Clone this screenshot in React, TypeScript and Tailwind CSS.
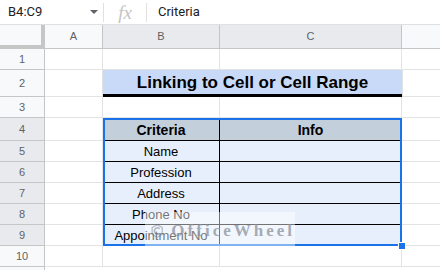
import React from "react";

const rowHead = "flex w-[45px] shrink-0 items-center justify-center border-r border-b border-[#c4c7c5] text-[11px] text-[#5f6368]";
const cell = "shrink-0 border-r border-b border-[#e2e3e3]";

function RowNum({ n, active, h }: { n: number; active?: boolean; h: string }) {
  return <div className={`${rowHead} ${h} ${active ? "bg-[#e8eaed]" : "bg-[#f8f9fa]"}`}>{n}</div>;
}

const items = ["Name", "Profession", "Address", "Phone No", "Appointment No"];

export default function App() {
  return (
    <div className="relative h-[270px] w-[440px] overflow-hidden bg-white font-['Liberation_Sans',Arial,sans-serif] text-[#202124]">
      {/* formula bar */}
      <div className="flex h-[25px] items-center border-b border-[#e0e0e0]">
        <div className="w-[85px] pl-2 font-['Roboto',sans-serif] text-[13px]">B4:C9</div>
        <div className="flex w-[18px] justify-center">
          <div className="h-0 w-0 border-x-[4px] border-t-[4px] border-x-transparent border-t-[#5f6368]" />
        </div>
        <div className="h-[19px] w-px bg-[#e0e0e0]" />
        <div className="flex w-[42px] justify-center font-['Liberation_Serif',serif] text-[19px] italic leading-none text-[#c4c4c4]">fx</div>
        <div className="h-[19px] w-px bg-[#e0e0e0]" />
        <div className="pl-[11px] font-['Roboto',sans-serif] text-[13px]">Criteria</div>
      </div>

      {/* column headers */}
      <div className="flex h-[24px] text-[11px] text-[#5f6368]">
        <div className="w-[45px] shrink-0 border-r-[4px] border-b-[4px] border-[#c4c7c5] bg-[#f8f9fa]" />
        <div className="flex w-[58px] shrink-0 items-center justify-center border-r border-b border-[#c4c7c5] bg-[#f8f9fa]">A</div>
        <div className="flex w-[117px] shrink-0 items-center justify-center border-r border-b border-[#c4c7c5] bg-[#e8eaed]">B</div>
        <div className="flex w-[182px] shrink-0 items-center justify-center border-r border-b border-[#c4c7c5] bg-[#e8eaed]">C</div>
        <div className="flex-1 border-b border-[#c4c7c5] bg-[#f8f9fa]" />
      </div>

      {/* row 1 */}
      <div className="flex h-[21px]">
        <RowNum n={1} h="h-[21px]" />
        <div className={`${cell} w-[58px]`} />
        <div className={`${cell} w-[117px]`} />
        <div className={`${cell} w-[182px]`} />
        <div className="flex-1 border-b border-[#e2e3e3]" />
      </div>

      {/* row 2: title */}
      <div className="flex h-[27px]">
        <RowNum n={2} h="h-[27px]" />
        <div className={`${cell} w-[58px]`} />
        <div className="flex w-[299px] shrink-0 items-center justify-center border-b-[3px] border-black bg-[#c9daf8] pt-[2px] text-[17px] font-bold text-black">
          Linking to Cell or Cell Range
        </div>
        <div className="flex-1 border-b border-l border-[#e2e3e3]" />
      </div>

      {/* row 3 */}
      <div className="flex h-[21px]">
        <RowNum n={3} h="h-[21px]" />
        <div className={`${cell} w-[58px]`} />
        <div className={`${cell} w-[117px]`} />
        <div className={`${cell} w-[182px]`} />
        <div className="flex-1 border-b border-[#e2e3e3]" />
      </div>

      {/* row 4: table header */}
      <div className="flex h-[23px]">
        <RowNum n={4} active h="h-[23px]" />
        <div className={`${cell} w-[58px]`} />
        <div className="flex w-[117px] shrink-0 items-center justify-center border-r border-b border-black bg-[#c4cfdc] pt-[2px] text-[14px] font-bold text-black">Criteria</div>
        <div className="flex w-[182px] shrink-0 items-center justify-center border-r border-b border-black bg-[#c4cfdc] pt-[2px] text-[14px] font-bold text-black">Info</div>
        <div className="flex-1 border-b border-[#e2e3e3]" />
      </div>

      {items.map((t, i) => (
        <div key={t} className="flex h-[21px]">
          <RowNum n={5 + i} active h="h-[21px]" />
          <div className={`${cell} w-[58px]`} />
          <div className="flex w-[117px] shrink-0 items-center justify-center whitespace-nowrap border-r border-b border-black bg-[#e7effc] pt-[1px] text-[13px] text-black">{t}</div>
          <div className="w-[182px] shrink-0 border-r border-b border-black bg-[#e7effc]" />
          <div className="flex-1 border-b border-[#e2e3e3]" />
        </div>
      ))}

      {/* row 10 */}
      <div className="flex h-[21px]">
        <RowNum n={10} h="h-[21px]" />
        <div className={`${cell} w-[58px]`} />
        <div className={`${cell} w-[117px]`} />
        <div className={`${cell} w-[182px]`} />
        <div className="flex-1 border-b border-[#e2e3e3]" />
      </div>
      <div className="flex h-[10px]">
        <div className="w-[45px] shrink-0 border-r border-[#c4c7c5] bg-[#f8f9fa]" />
      </div>

      {/* selection */}
      <div className="pointer-events-none absolute left-[103px] top-[118px] h-[128px] w-[299px] border-2 border-[#1a73e8]" />
      <div className="absolute left-[398px] top-[242px] h-[8px] w-[8px] border border-white bg-[#1a73e8]" />

      {/* watermark */}
      <div className="absolute left-[145px] top-[212px] flex h-[34px] w-[150px] items-center gap-[8px] bg-white/45 pl-[6px] pt-[3px]">
        <svg width="22" height="26" viewBox="0 0 22 26" className="opacity-50">
          <path d="M11 2 L20 7 L20 19 L11 24 L2 19 L2 7 Z" fill="none" stroke="#6b7380" strokeWidth="2" />
          <path d="M15.5 9 A5.5 5.5 0 1 0 15.5 17" fill="none" stroke="#6b7380" strokeWidth="2.4" />
        </svg>
        <span className="font-['Liberation_Serif',serif] text-[17px] font-bold tracking-[3px] text-[#8a919c]/75">OfficeWheel</span>
      </div>
    </div>
  );
}
